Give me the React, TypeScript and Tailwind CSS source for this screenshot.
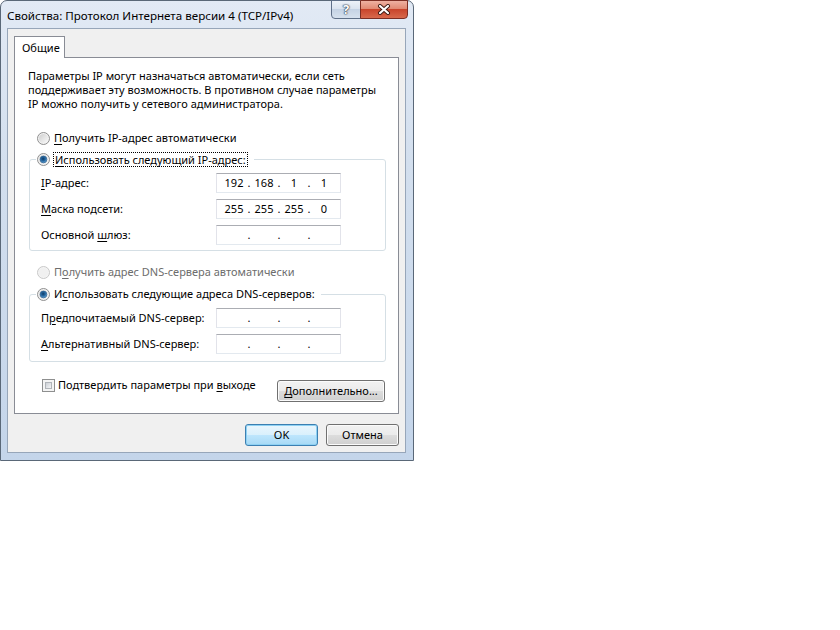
import React from "react";

// Underlines the keyboard-mnemonic letter at index `u`, as Windows dialogs do.
function Mnemonic({ text, u }: { text: string; u?: number }) {
  if (u === undefined) return <>{text}</>;
  return (
    <>
      {text.slice(0, u)}
      <span className="underline underline-offset-2">{text[u]}</span>
      {text.slice(u + 1)}
    </>
  );
}

function Radio({ checked, disabled }: { checked?: boolean; disabled?: boolean }) {
  return (
    <svg width="13" height="13" viewBox="0 0 13 13" className="shrink-0">
      <defs>
        <linearGradient id="rb-fill" x1="0" y1="0" x2="1" y2="1">
          <stop offset="0" stopColor="#cfcfcf" />
          <stop offset="1" stopColor="#fafafa" />
        </linearGradient>
        <radialGradient id="rb-dot" cx="0.45" cy="0.4" r="0.65">
          <stop offset="0" stopColor="#0d3a66" />
          <stop offset="0.55" stopColor="#2b6ea8" />
          <stop offset="1" stopColor="#86bde8" />
        </radialGradient>
      </defs>
      <circle cx="6.5" cy="6.5" r="6" fill={disabled ? "#f4f4f4" : "#f2f2f2"} stroke={disabled ? "#c8c8c8" : "#8f8f8f"} />
      <circle cx="6.5" cy="6.5" r="4.6" fill={disabled ? "#f0f0f0" : "url(#rb-fill)"} />
      {checked && <circle cx="6.5" cy="6.5" r="3.4" fill="url(#rb-dot)" stroke="#1d4f7e" strokeWidth="0.6" />}
    </svg>
  );
}

function Checkbox() {
  return (
    <span className="w-[13px] h-[13px] shrink-0 border border-[#8e8f8f] bg-[#f4f4f4] p-[2px]">
      <span className="block w-full h-full border border-[#b0b4b9] bg-[linear-gradient(135deg,#cbcfd5,#f4f5f6)]" />
    </span>
  );
}

// An IP address box: four octet cells with fixed dots between them.
function IpField({ octets }: { octets?: string[] }) {
  const cells = octets ?? ["", "", "", ""];
  return (
    <div className="w-[125px] h-[20px] flex items-center pl-[4px] bg-white border border-[#e2e3ea] border-t-[#abadb3] border-b-[#e3e9ef]">
      {cells.map((o, i) => (
        <React.Fragment key={i}>
          <span className="w-[26px] text-center">{o}</span>
          {i < 3 && <span className="w-[4px] text-center">.</span>}
        </React.Fragment>
      ))}
    </div>
  );
}

function FieldRow({ label, u, octets }: { label: string; u?: number; octets?: string[] }) {
  return (
    <div className="flex items-center h-[20px] pl-[11px]">
      <span className="w-[175px] whitespace-nowrap">
        <Mnemonic text={label} u={u} />
      </span>
      <IpField octets={octets} />
    </div>
  );
}

function Button({ children, isDefault, className = "" }: { children: React.ReactNode; isDefault?: boolean; className?: string }) {
  const look = isDefault
    ? "border-[#3c7fb1] bg-[linear-gradient(#eaf6fd_0%,#d9f0fc_50%,#bee6fd_50%,#a7d9f5_100%)] shadow-[inset_0_0_0_1px_#8ed1f3]"
    : "border-[#707070] bg-[linear-gradient(#f2f2f2_0%,#ebebeb_50%,#dddddd_50%,#cfcfcf_100%)] shadow-[inset_0_0_0_1px_#fbfbfb]";
  return (
    <div className={`h-[22px] flex items-center justify-center rounded-[3px] border whitespace-nowrap ${look} ${className}`}>
      {children}
    </div>
  );
}

export default function App() {
  return (
    <div className="w-[840px] h-[630px] bg-white font-['Noto_Sans',sans-serif] text-[11px] leading-[16px] text-black">
      <div className="relative flex flex-col w-[414px] h-[461px] rounded-t-[7px] border border-[#5a6878] bg-[linear-gradient(180deg,#e2eaf5_0%,#d3dfee_35%,#c4d5ea_100%)]">
        <div className="h-[27px] flex items-center pt-[2px] pl-[6px] text-[11.6px] whitespace-nowrap">
          Свойства: Протокол Интернета версии 4 (TCP/IPv4)
        </div>

        {/* caption buttons */}
        <div className="absolute -top-px right-[5px] flex">
          <div className="w-[30px] h-[19px] flex items-center justify-center rounded-bl-[4px] border border-[#5f7088] bg-[linear-gradient(#edf2f8_0%,#dbe4ef_45%,#c5d3e4_50%,#d6e1ee_100%)]">
            <span className="text-white font-bold text-[13px] leading-none [text-shadow:0_0_1px_#2d3a4a,0_0_1px_#2d3a4a,0_0_2px_#2d3a4a]">?</span>
          </div>
          <div className="w-[48px] h-[19px] -ml-px flex items-center justify-center rounded-br-[4px] border border-[#7c2e24] bg-[linear-gradient(#eeb1a2_0%,#e18a74_45%,#c9452c_50%,#d8694c_100%)]">
            <svg width="14" height="11" viewBox="0 0 14 11">
              <path d="M3 2 L11 9 M11 2 L3 9" stroke="#3a1812" strokeWidth="4" strokeLinecap="round" />
              <path d="M3 2 L11 9 M11 2 L3 9" stroke="#ffffff" strokeWidth="2.2" strokeLinecap="round" />
            </svg>
          </div>
        </div>

        <div className="flex-1 ml-[6px] mr-[7px] mb-[7px] flex flex-col border border-[#97a6b9] bg-[#f0f0f0] px-[6px] pt-[7px]">
          <div className="flex">
            <div className="relative z-10 -mb-px w-[51px] h-[22px] flex items-center pl-[7px] border border-b-0 border-[#898c95] bg-white">
              Общие
            </div>
          </div>

          <div className="border border-[#898c95] bg-white pl-[13px] pr-[12px] pt-[11px] pb-[11px]">
            <p className="leading-[14px] whitespace-nowrap">
              Параметры IP могут назначаться автоматически, если сеть
              <br />
              поддерживает эту возможность. В противном случае параметры
              <br />
              IP можно получить у сетевого администратора.
            </p>

            <div className="mt-[19px] pl-[9px] h-[16px] flex items-center gap-[4px]">
              <Radio />
              <span><Mnemonic text="Получить IP-адрес автоматически" u={0} /></span>
            </div>

            <fieldset className="mt-[5px] ml-[1px] w-[357px] rounded-[3px] border border-[#d5dfe5] pt-[6px] pb-[5px]">
              <legend className="ml-[6px] pl-[1px] pr-[6px]">
                <div className="h-[16px] flex items-center gap-[3px]">
                  <Radio checked />
                  <span className="border border-dotted border-black px-px leading-[13px]">
                    <Mnemonic text="Использовать следующий IP-адрес:" u={0} />
                  </span>
                </div>
              </legend>
              <div className="flex flex-col gap-[6px]">
                <FieldRow label="IP-адрес:" u={0} octets={["192", "168", "1", "1"]} />
                <FieldRow label="Маска подсети:" u={0} octets={["255", "255", "255", "0"]} />
                <FieldRow label="Основной шлюз:" u={9} />
              </div>
            </fieldset>

            <div className="mt-[13px] pl-[9px] h-[16px] flex items-center gap-[4px] text-[#6d6d6d]">
              <Radio disabled />
              <span><Mnemonic text="Получить адрес DNS-сервера автоматически" u={1} /></span>
            </div>

            <fieldset className="mt-[6px] ml-[1px] w-[357px] rounded-[3px] border border-[#d5dfe5] pt-[6px] pb-[7px]">
              <legend className="ml-[6px] pl-[1px] pr-[6px]">
                <div className="h-[16px] flex items-center gap-[4px]">
                  <Radio checked />
                  <span><Mnemonic text="Использовать следующие адреса DNS-серверов:" u={1} /></span>
                </div>
              </legend>
              <div className="flex flex-col gap-[6px]">
                <FieldRow label="Предпочитаемый DNS-сервер:" u={1} />
                <FieldRow label="Альтернативный DNS-сервер:" u={0} />
              </div>
            </fieldset>

            <div className="mt-[15px] flex items-start justify-between">
              <div className="ml-[14px] h-[16px] flex items-center gap-[3px]">
                <Checkbox />
                <span><Mnemonic text="Подтвердить параметры при выходе" u={26} /></span>
              </div>
              <Button className="mt-[3px] mr-px w-[108px]">
                <Mnemonic text="Дополнительно..." u={0} />
              </Button>
            </div>
          </div>

          <div className="mt-[10px] flex justify-end gap-[8px]">
            <Button isDefault className="w-[73px]">OK</Button>
            <Button className="w-[73px]">Отмена</Button>
          </div>
        </div>
      </div>
    </div>
  );
}
